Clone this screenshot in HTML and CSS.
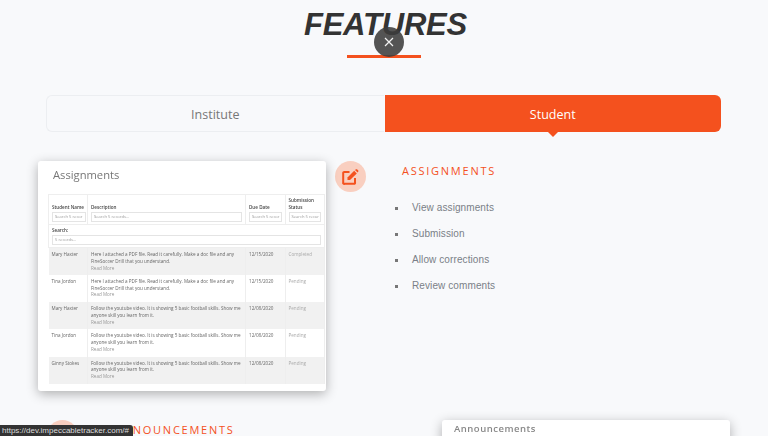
FILE: index.html
```html
<!DOCTYPE html>
<html lang="en">
<head>
    <meta charset="UTF-8">
    <meta name="viewport" content="width=device-width, initial-scale=1.0">
    <title>Features</title>
    <link rel="stylesheet" href="styles.css">
</head>
<body>
    <div class="page">
        <div class="title-block">
            <h1 class="title">FEATURES</h1>
            <div class="title-line"></div>
            <button class="close-btn" aria-label="Close">
                <svg width="10" height="10" viewBox="0 0 10 10"><path d="M1 1L9 9M9 1L1 9" stroke="#f2f2f2" stroke-width="1.2" fill="none"/></svg>
            </button>
        </div>

        <div class="tabs">
            <div class="tab">Institute</div>
            <div class="tab active">Student</div>
        </div>

        <div class="feature-row">
            <div class="shot">
                <div class="shot-title">Assignments</div>
                <table class="shot-table">
                    <colgroup>
                        <col class="col-name">
                        <col class="col-desc">
                        <col class="col-date">
                        <col class="col-status">
                    </colgroup>
                    <tr class="head-row">
                        <th class="one-line">Student Name<span class="fake-input">Search 5 recor</span></th>
                        <th>Description<span class="fake-input">Search 5 records...</span></th>
                        <th>Due Date<span class="fake-input">Search 5 recor</span></th>
                        <th>Submission Status<span class="fake-input">Search 5 recor</span></th>
                    </tr>
                    <tr class="search-row">
                        <th colspan="4">Search:<span class="fake-input">5 records...</span></th>
                    </tr>
                    <tr class="odd">
                        <td>Mary Haxter</td>
                        <td>Here I attached a PDF file. Read it carefully. Make a doc file and any FineSoccer Drill that you understand.<span class="more">Read More</span></td>
                        <td>12/15/2020</td>
                        <td class="status">Completed</td>
                    </tr>
                    <tr>
                        <td>Tina Jordon</td>
                        <td>Here I attached a PDF file. Read it carefully. Make a doc file and any FineSoccer Drill that you understand.<span class="more">Read More</span></td>
                        <td>12/15/2020</td>
                        <td class="status">Pending</td>
                    </tr>
                    <tr class="odd">
                        <td>Mary Haxter</td>
                        <td>Follow the youtube video. It is showing 5 basic football skills. Show me anyone skill you learn from it.<span class="more">Read More</span></td>
                        <td>12/08/2020</td>
                        <td class="status">Pending</td>
                    </tr>
                    <tr>
                        <td>Tina Jordon</td>
                        <td>Follow the youtube video. It is showing 5 basic football skills. Show me anyone skill you learn from it.<span class="more">Read More</span></td>
                        <td>12/08/2020</td>
                        <td class="status">Pending</td>
                    </tr>
                    <tr class="odd">
                        <td>Ginny Stokes</td>
                        <td>Follow the youtube video. It is showing 5 basic football skills. Show me anyone skill you learn from it.<span class="more">Read More</span></td>
                        <td>12/08/2020</td>
                        <td class="status">Pending</td>
                    </tr>
                </table>
            </div>

            <div class="icon-circle">
                <svg width="17" height="16" viewBox="0 0 17 16">
                    <path d="M7.5 3H2.5A1 1 0 0 0 1.2 4.2V13.5A1 1 0 0 0 2.5 14.8H11.8A1 1 0 0 0 13 13.5V9" fill="none" stroke="#f4511e" stroke-width="2"/>
                    <path d="M5.5 8.5L12.2 1.8L14.8 4.4L8 11H5.5Z" fill="#f4511e"/>
                    <path d="M13 1L14 0.3Q14.5 0 15 0.3L16.3 1.6Q16.6 2.1 16.3 2.6L15.6 3.5Z" fill="#f4511e"/>
                </svg>
            </div>

            <div class="feature-info">
                <h3 class="feature-heading">ASSIGNMENTS</h3>
                <ul class="feature-list">
                    <li>View assignments</li>
                    <li>Submission</li>
                    <li>Allow corrections</li>
                    <li>Review comments</li>
                </ul>
            </div>
        </div>

        <div class="feature-row second">
            <div class="icon-circle"></div>
            <h3 class="feature-heading">ANNOUNCEMENTS</h3>
            <div class="shot shot-small">
                <div class="shot-title-small">Announcements</div>
            </div>
        </div>
    </div>

    <div class="status-link">https://dev.impeccabletracker.com/#</div>
</body>
</html>
```

FILE: styles.css
```css
/* General Page Styling */
html, body {
    margin: 0;
    padding: 0;
    height: 436px;
    overflow: hidden;
}

body {
    background-color: #f8f9fb;
    font-family: "Open Sans", sans-serif;
    color: #666;
}

.page {
    display: flex;
    flex-direction: column;
    height: 436px;
    overflow: hidden;
}

/* Title */
.title-block {
    position: relative;
    display: flex;
    flex-direction: column;
    align-items: center;
    height: 95px;
    flex-shrink: 0;
    padding-left: 3px;
    box-sizing: border-box;
}

.title {
    margin: 6px 0 0 0;
    font-family: "Liberation Sans", sans-serif;
    font-size: 31px;
    line-height: 38px;
    font-style: italic;
    font-weight: bold;
    letter-spacing: -0.2px;
    color: #333;
}

.title-line {
    width: 74px;
    height: 3px;
    margin-top: 11px;
    margin-left: -3px;
    background: #f4511e;
}

.close-btn {
    position: absolute;
    left: 374px;
    top: 27px;
    width: 30px;
    height: 30px;
    padding: 0;
    border: none;
    border-radius: 50%;
    background: rgba(60, 60, 60, 0.88);
    display: flex;
    align-items: center;
    justify-content: center;
}

/* Tabs */
.tabs {
    display: flex;
    width: 675px;
    height: 37px;
    flex-shrink: 0;
    margin-left: 46px;
}

.tab {
    flex: 1;
    display: flex;
    align-items: center;
    justify-content: center;
    padding-top: 1px;
    font-size: 12.5px;
    color: #777;
    background: #f8f9fb;
    border: 1px solid #eceef1;
    border-right: none;
    border-radius: 6px 0 0 6px;
    box-sizing: border-box;
}

.tab.active {
    position: relative;
    background: #f4511e;
    color: white;
    border: none;
    border-radius: 0 6px 6px 0;
    margin-left: 1px;
}

.tab.active::after {
    content: "";
    position: absolute;
    left: 50%;
    bottom: -5px;
    margin-left: -5px;
    border-left: 5px solid transparent;
    border-right: 5px solid transparent;
    border-top: 5px solid #f4511e;
}

/* Feature rows */
.feature-row {
    display: flex;
    align-items: flex-start;
    flex-shrink: 0;
    margin-top: 29px;
    padding-left: 38px;
}

.shot {
    width: 288px;
    height: 230px;
    flex-shrink: 0;
    background: white;
    border-radius: 3px;
    box-shadow: 0 3px 12px rgba(0, 0, 0, 0.3);
    box-sizing: border-box;
    padding-left: 10px;
    filter: blur(0.45px);
}

.shot-title {
    height: 33px;
    padding: 5px 0 0 5px;
    box-sizing: border-box;
    font-size: 11.2px;
    line-height: 18px;
    color: #777;
}

.shot-table {
    width: 276px;
    border-collapse: collapse;
    table-layout: fixed;
    font-size: 4.6px;
    line-height: 6.8px;
    color: #666;
}

.col-name { width: 39px; }
.col-desc { width: 158px; }
.col-date { width: 39.5px; }
.col-status { width: 39.5px; }

.shot-table th {
    text-align: left;
    font-weight: 600;
    color: #444;
    vertical-align: bottom;
    padding: 1px 3px 2px 3px;
    border: 1px solid #eee;
    overflow: hidden;
}

.shot-table .one-line {
    padding-right: 1px;
    white-space: nowrap;
}

.head-row {
    height: 30px;
}

.search-row {
    height: 23px;
}

.fake-input {
    display: block;
    height: 8px;
    margin-top: 1px;
    padding-left: 2px;
    border: 0.5px solid #e4e4e4;
    font-weight: normal;
    font-size: 4.1px;
    line-height: 8px;
    color: #999;
    white-space: nowrap;
    overflow: hidden;
}

.shot-table td {
    height: 27.3px;
    box-sizing: border-box;
    padding: 3px 1px 0 3px;
    vertical-align: top;
    border-right: 1px solid #eee;
}

.shot-table .odd td {
    background: #f1f1f1;
}

.more {
    display: block;
    color: #999;
}

.status {
    color: #aaa;
}

.icon-circle {
    width: 31px;
    height: 31px;
    flex-shrink: 0;
    margin-left: 9px;
    border-radius: 50%;
    background: #f9cfc0;
    display: flex;
    align-items: center;
    justify-content: center;
}

.feature-info {
    margin-left: 36px;
}

.feature-heading {
    margin: 3px 0 0 0;
    font-size: 11px;
    line-height: 14px;
    font-weight: 500;
    letter-spacing: 1.75px;
    color: #f4511e;
}

.feature-list {
    list-style: none;
    margin: 23px 0 0 -7px;
    padding: 0;
    font-family: "Liberation Sans", sans-serif;
    font-size: 10px;
    line-height: 14px;
    letter-spacing: 0.1px;
    color: #7a7f87;
}

.feature-list li {
    position: relative;
    padding-left: 17px;
    margin-bottom: 12px;
}

.feature-list li::before {
    content: "";
    position: absolute;
    left: 0;
    top: 6px;
    width: 3px;
    height: 3px;
    background: #777;
}

.second {
    padding-left: 0;
    margin-top: 29px;
}

.second .icon-circle {
    margin-left: 47px;
}

.second .feature-heading {
    margin: 3px 0 0 36px;
    width: 328px;
    flex-shrink: 0;
}

.shot-small {
    width: 288px;
    height: 60px;
    padding: 3px 0 0 12px;
}

.shot-title-small {
    font-size: 9.5px;
    line-height: 12px;
    letter-spacing: 0.5px;
    font-weight: 600;
    color: #888;
}

/* Browser status link */
.status-link {
    position: fixed;
    left: 0;
    bottom: 0;
    height: 11px;
    padding: 0 4px 0 2px;
    border-top-right-radius: 3px;
    background: #333;
    color: #ddd;
    font-family: "Liberation Sans", sans-serif;
    font-size: 8px;
    line-height: 11px;
}
```
